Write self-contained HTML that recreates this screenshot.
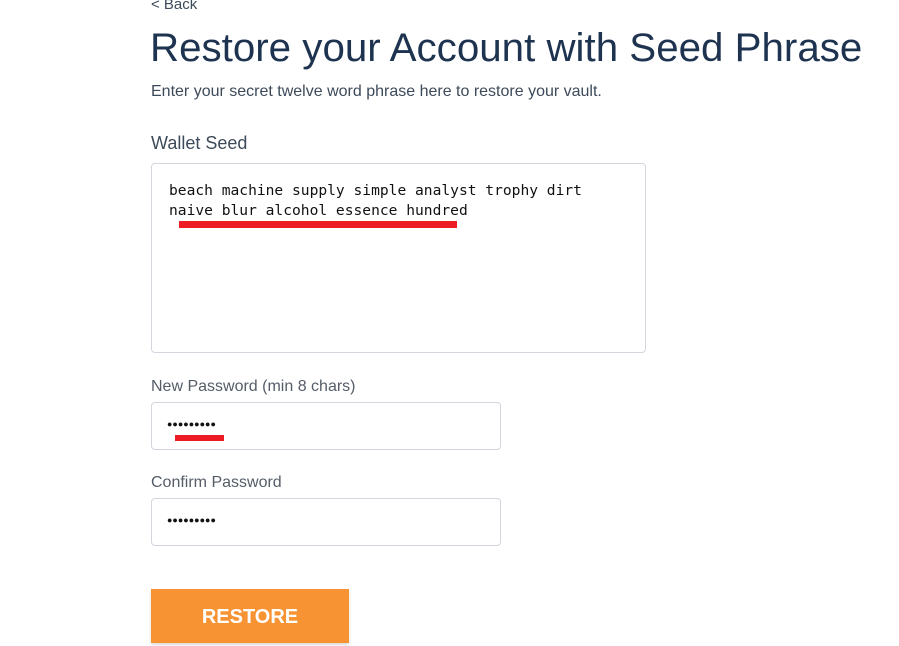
<!DOCTYPE html>
<html><head><style>
body{margin:0;width:899px;height:646px;background:#fff;position:relative;overflow:hidden;font-family:"Liberation Sans",sans-serif;}
.a{position:absolute;white-space:nowrap}
.box{position:absolute;border:1px solid #d3d6dd;border-radius:4px;background:#fff;box-sizing:border-box}
.red{position:absolute;background:#ed1c24}
.mono{font-family:"DejaVu Sans Mono","Liberation Mono",monospace;font-size:14.6px;color:#111;letter-spacing:0px}
</style></head><body>
<div class="a" style="left:151px;top:-4px;font-size:15px;color:#3d4a5a">&lt; Back</div>
<div class="a" style="left:150px;top:25px;font-size:40.3px;color:#1e3350;">Restore your Account with Seed Phrase</div>
<div class="a" style="left:151px;top:83px;font-size:16px;color:#3d4a5a">Enter your secret twelve word phrase here to restore your vault.</div>
<div class="a" style="left:151px;top:133px;font-size:18px;color:#3d4a5a">Wallet Seed</div>
<div class="box" style="left:151px;top:163px;width:495px;height:190px"></div>
<div class="a mono" style="left:169px;top:181px;line-height:20px">beach machine supply simple analyst trophy dirt<br>naive blur alcohol essence hundred</div>
<div class="red" style="left:179px;top:221px;width:278px;height:7px"></div>
<div class="a" style="left:151px;top:378px;font-size:16px;color:#555d68">New Password (min 8 chars)</div>
<div class="box" style="left:151px;top:402px;width:350px;height:48px"></div>
<div class="a" style="left:167px;top:419px;font-size:9px;color:#111;letter-spacing:0px">●●●●●●●●●</div>
<div class="red" style="left:175px;top:435px;width:49px;height:6px"></div>
<div class="a" style="left:151px;top:474px;font-size:16px;color:#555d68">Confirm Password</div>
<div class="box" style="left:151px;top:498px;width:350px;height:48px"></div>
<div class="a" style="left:167px;top:515px;font-size:9px;color:#111;letter-spacing:0px">●●●●●●●●●</div>
<div style="position:absolute;left:151px;top:589px;width:198px;height:54px;background:#f79332;box-shadow:0 2px 3px rgba(0,0,0,.15);color:#fff;font-weight:bold;font-size:20px;text-align:center;line-height:57px">RESTORE</div>
</body></html>
